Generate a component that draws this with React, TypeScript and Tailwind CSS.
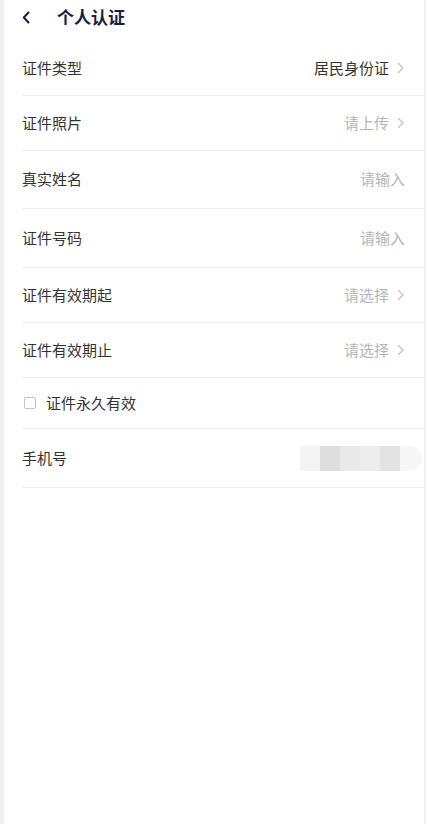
import React from "react";

type Row = {
  label: string;
  value?: string;
  placeholder?: string;
  arrow?: boolean;
  h: string;
};

const rows: Row[] = [
  { label: "证件类型", value: "居民身份证", arrow: true, h: "h-[55px]" },
  { label: "证件照片", placeholder: "请上传", arrow: true, h: "h-[55px]" },
  { label: "真实姓名", placeholder: "请输入", h: "h-[58px]" },
  { label: "证件号码", placeholder: "请输入", h: "h-[59px]" },
  { label: "证件有效期起", placeholder: "请选择", arrow: true, h: "h-[55px]" },
  { label: "证件有效期止", placeholder: "请选择", arrow: true, h: "h-[55px]" },
];

const Chevron = () => (
  <svg width="8" height="12" viewBox="0 0 8 12" className="ml-[8px] shrink-0">
    <path d="M1.5 1.5 L6 6 L1.5 10.5" stroke="#c4c4c4" strokeWidth="1.4" fill="none" strokeLinecap="round" strokeLinejoin="round" />
  </svg>
);

export default function App() {
  return (
    <div className="min-h-[824px] w-full bg-[#efefef] pl-[4px] pr-[2px] font-['Noto_Sans_CJK_SC','Noto_Sans',sans-serif]">
      <div className="min-h-[824px] bg-white">
        {/* Header */}
        <div className="h-[41px] flex items-start pt-[5px] pl-[18px]">
          <div className="h-[24px] flex items-center">
            <svg width="8" height="13" viewBox="0 0 8 13">
              <path d="M6.5 1.5 L1.8 6.5 L6.5 11.5" stroke="#1c1c40" strokeWidth="2" fill="none" strokeLinecap="round" strokeLinejoin="round" />
            </svg>
          </div>
          <div className="ml-[27px] text-[17px] leading-[24px] font-bold text-[#1c1c40]">个人认证</div>
        </div>

        <div className="pl-[18px]">
          {rows.map((r) => (
            <div key={r.label} className={`${r.h} flex items-center justify-between border-b border-[#eeeeee] pr-[19px]`}>
              <span className="text-[15px] text-[#333333]">{r.label}</span>
              <div className="flex items-center">
                {r.value ? (
                  <span className="text-[15px] text-[#333333]">{r.value}</span>
                ) : (
                  <span className="text-[15px] text-[#b5b5b5]">{r.placeholder}</span>
                )}
                {r.arrow && <Chevron />}
              </div>
            </div>
          ))}

          {/* Permanent checkbox */}
          <div className="h-[51px] flex items-center border-b border-[#eeeeee] pl-[2px]">
            <div className="w-[12px] h-[12px] border border-[#c4c4c4] rounded-[2px]" />
            <span className="ml-[10px] text-[15px] text-[#333333]">证件永久有效</span>
          </div>

          {/* Phone (masked) */}
          <div className="h-[59px] flex items-center justify-between border-b border-[#eeeeee]">
            <span className="text-[15px] text-[#333333]">手机号</span>
            <div className="flex items-center h-[25px] mr-[2px]">
              <div className="w-[20px] h-full bg-[#f4f4f4]" />
              <div className="w-[20px] h-full bg-[#dedede]" />
              <div className="w-[20px] h-full bg-[#e9e9e9]" />
              <div className="w-[20px] h-full bg-[#ededed]" />
              <div className="w-[20px] h-full bg-[#e3e3e3]" />
              <div className="w-[22px] h-full bg-[#f7f7f7] rounded-r-full" />
            </div>
          </div>
        </div>
      </div>
    </div>
  );
}
